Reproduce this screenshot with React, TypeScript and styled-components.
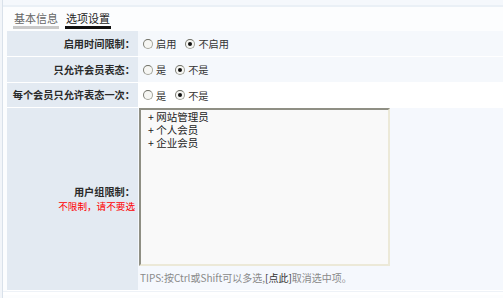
import React from "react";
import styled, { createGlobalStyle } from "styled-components";

const Global = createGlobalStyle`
  html, body { margin: 0; padding: 0; background: #ffffff; }
  body {
    font-family: "Noto Sans CJK SC", "Noto Sans", sans-serif;
    font-size: 10.2px;
    color: #333;
    text-spacing-trim: space-all;
  }
`;

const Page = styled.div`
  width: 503px;
  height: 298px;
  overflow: hidden;
  display: flex;
  background: #fcfdfe;
`;

const Rail = styled.div`
  width: 2px;
  flex: none;
  background: #f2f5f9;
  border-right: 1px solid #d9e1ea;
`;

const Main = styled.div`
  flex: 1;
  display: flex;
  flex-direction: column;
  min-width: 0;
`;

const TopBand = styled.div`
  height: 5px;
  background: #f5f8fc;
  border-bottom: 2px solid #eaf0f6;
`;

const Tabs = styled.div`
  display: flex;
  align-items: flex-end;
  gap: 6px;
  height: 22px;
  padding-left: 10px;
  margin-bottom: 2px;
`;

const Tab = styled.span<{ $active?: boolean }>`
  font-size: 11px;
  line-height: 15px;
  color: ${(p) => (p.$active ? "#222" : "#666")};
  border-bottom: 3px solid ${(p) => (p.$active ? "#111" : "#c9c9c9")};
  padding: 0 1px;
`;

const Table = styled.div`
  margin-left: 4px;
  display: grid;
  grid-template-columns: 131px 1fr;
`;

const Label = styled.div<{ $h: number }>`
  height: ${(p) => p.$h}px;
  background: #e3eaf2;
  border-bottom: 1px solid #ffffff;
  display: flex;
  flex-direction: column;
  align-items: flex-end;
  justify-content: center;
  padding-right: 3px;
  font-size: 10.2px;
  line-height: 14px;
  font-weight: bold;
  color: #2a2a2a;
  white-space: nowrap;
`;

const Note = styled.span`
  color: #ff0000;
  font-weight: normal;
  font-size: 9.6px;
`;

const Field = styled.div<{ $h: number; $bg: string }>`
  height: ${(p) => p.$h}px;
  background: ${(p) => p.$bg};
  border-bottom: 1px solid #ffffff;
  display: flex;
  align-items: center;
  padding-left: 5px;
  gap: 9px;
`;

const Choice = styled.label`
  display: flex;
  align-items: center;
  gap: 3px;
  color: #333;
  font-size: 10.2px;
`;

const Dot = styled.span<{ $on?: boolean }>`
  width: 8px;
  height: 8px;
  border-radius: 50%;
  border: 1px solid #a5a59b;
  border-top-color: #6f6f66;
  border-left-color: #7d7d74;
  background: #f6f6f3;
  position: relative;
  &::after {
    content: "";
    display: ${(p) => (p.$on ? "block" : "none")};
    position: absolute;
    left: 2px;
    top: 2px;
    width: 4px;
    height: 4px;
    border-radius: 50%;
    background: #111;
  }
`;

const GroupField = styled.div`
  height: 182px;
  background: #f5f8fd;
  border-bottom: 1px solid #ffffff;
  display: flex;
  flex-direction: column;
  padding-left: 1px;
`;

const ListBox = styled.div`
  box-sizing: border-box;
  width: 251px;
  height: 158px;
  background: #f9f9f9;
  border-style: solid;
  border-width: 2px;
  border-color: #8f8f84 #ece9d8 #ece9d8 #8f8f84;
  padding: 0 0 0 7px;
  display: flex;
  flex-direction: column;
`;

const Option = styled.div`
  font-size: 10.5px;
  line-height: 13px;
  color: #222;
`;

const Tips = styled.div`
  margin-top: 5px;
  font-size: 10px;
  line-height: 14px;
  color: #8a8a8a;
  padding-left: 1px;
`;

const Link = styled.span`
  color: #333;
`;

const Bottom = styled.div`
  height: 3px;
  border-top: 1px solid #eef2f7;
  background: #ffffff;
`;

type Opt = { text: string; on?: boolean };
const rows: { label: string; opts: Opt[]; h: number; bg: string }[] = [
  { label: "启用时间限制：", opts: [{ text: "启用" }, { text: "不启用", on: true }], h: 25, bg: "#f5f8fc" },
  { label: "只允许会员表态：", opts: [{ text: "是" }, { text: "不是", on: true }], h: 25, bg: "#f5f8fc" },
  { label: "每个会员只允许表态一次：", opts: [{ text: "是" }, { text: "不是", on: true }], h: 24, bg: "#ffffff" },
];

export default function App() {
  return (
    <Page>
      <Global />
      <Rail />
      <Main>
        <TopBand />
        <Tabs>
          <Tab>基本信息</Tab>
          <Tab $active>选项设置</Tab>
        </Tabs>
        <Table>
          {rows.map((r) => (
            <React.Fragment key={r.label}>
              <Label $h={r.h}>{r.label}</Label>
              <Field $h={r.h} $bg={r.bg}>
                {r.opts.map((o) => (
                  <Choice key={o.text}>
                    <Dot $on={o.on} />
                    {o.text}
                  </Choice>
                ))}
              </Field>
            </React.Fragment>
          ))}
          <Label $h={182}>
            <span>用户组限制：</span>
            <Note>不限制，请不要选</Note>
          </Label>
          <GroupField>
            <ListBox>
              <Option>+ 网站管理员</Option>
              <Option>+ 个人会员</Option>
              <Option>+ 企业会员</Option>
            </ListBox>
            <Tips>
              TIPS:按Ctrl或Shift可以多选,<Link>[点此]</Link>取消选中项。
            </Tips>
          </GroupField>
        </Table>
        <Bottom />
      </Main>
    </Page>
  );
}
